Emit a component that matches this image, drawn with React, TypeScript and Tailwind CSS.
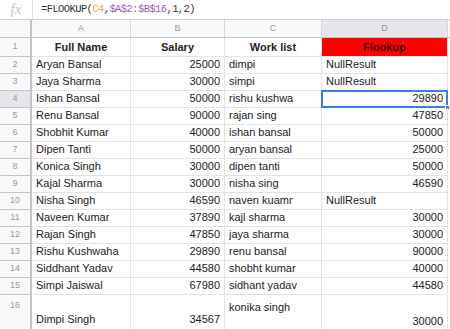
const rows: [string, string, string, string][] = [
  ["Aryan Bansal", "25000", "dimpi", "NullResult"],
  ["Jaya Sharma", "30000", "simpi", "NullResult"],
  ["Ishan Bansal", "50000", "rishu kushwa", "29890"],
  ["Renu Bansal", "90000", "rajan sing", "47850"],
  ["Shobhit Kumar", "40000", "ishan bansal", "50000"],
  ["Dipen Tanti", "50000", "aryan bansal", "25000"],
  ["Konica Singh", "30000", "dipen tanti", "50000"],
  ["Kajal Sharma", "30000", "nisha sing", "46590"],
  ["Nisha Singh", "46590", "naven kuamr", "NullResult"],
  ["Naveen Kumar", "37890", "kajl sharma", "30000"],
  ["Rajan Singh", "47850", "jaya sharma", "30000"],
  ["Rishu Kushwaha", "29890", "renu bansal", "90000"],
  ["Siddhant Yadav", "44580", "shobht kumar", "40000"],
  ["Simpi Jaiswal", "67980", "sidhant yadav", "44580"],
];

const isNum = (s: string) => /^\d+$/.test(s);

function Cell({ value, w, selected }: { value: string; w: string; selected?: boolean }) {
  return (
    <div
      className={`${w} relative h-full flex items-end px-[4px] pb-[1px] border-r border-b border-[#e2e3e3] ${
        isNum(value) ? "justify-end" : "justify-start"
      }`}
    >
      <span className="truncate">{value}</span>
      {selected && (
        <>
          <div className="absolute inset-[-1px] border-2 border-[#3b7de0]" />
          <div className="absolute right-[-3px] bottom-[-3px] w-[5px] h-[5px] bg-[#3b7de0] border border-white" />
        </>
      )}
    </div>
  );
}

export default function App() {
  return (
    <div
      className="w-[450px] h-[329px] overflow-hidden bg-white text-[11px] text-[#222]"
      style={{ fontFamily: '"Liberation Sans", Arial, sans-serif' }}
    >
      {/* formula bar */}
      <div className="flex h-[20px] border-b border-[#d0d0d0]">
        <div className="w-[33px] flex items-center justify-center border-r border-[#e0e0e0]">
          <span className="italic text-[15px] leading-none text-[#c4c4c4]" style={{ fontFamily: '"Liberation Serif", serif' }}>
            fx
          </span>
        </div>
        <div
          className="flex items-center pl-[8px] text-[10.5px] tracking-[-0.6px] text-[#333]"
          style={{ fontFamily: '"Liberation Mono", monospace' }}
        >
          <span>=FLOOKUP(</span>
          <span className="text-[#f0a24a]">C4</span>
          <span>,</span>
          <span className="text-[#9a5cb4]">$A$2:$B$16</span>
          <span>,1,2)</span>
        </div>
      </div>

      {/* column headers */}
      <div className="flex h-[18px] bg-[#f8f9fa] text-[9px] text-[#999] border-b border-[#c4c4c4]">
        <div className="w-[32px] border-r-[2px] border-[#c4c4c4]" />
        <div className="w-[99px] flex items-center justify-center border-r border-[#d8d8d8]">A</div>
        <div className="w-[94px] flex items-center justify-center border-r border-[#d8d8d8]">B</div>
        <div className="w-[97px] flex items-center justify-center border-r border-[#d8d8d8]">C</div>
        <div className="w-[126px] flex items-center justify-center border-r border-[#d8d8d8] bg-[#e4e6e9]">D</div>
      </div>

      {/* row 1 */}
      <div className="flex h-[19px] font-bold text-[11px]">
        <div className="w-[32px] flex items-center justify-center bg-[#f8f9fa] text-[9px] font-normal text-[#999] border-r-[2px] border-b border-[#c4c4c4]">
          1
        </div>
        <div className="w-[99px] flex items-center justify-center border-r border-b border-[#e2e3e3]">Full Name</div>
        <div className="w-[94px] flex items-center justify-center border-r border-b border-[#e2e3e3]">Salary</div>
        <div className="w-[97px] flex items-center justify-center border-r border-b border-[#e2e3e3]">Work list</div>
        <div className="w-[126px] flex items-center justify-center bg-[#ff0000] text-[#3a0000] border-r border-b border-[#e2e3e3]">
          Flookup
        </div>
      </div>

      {rows.map((r, i) => {
        const n = i + 2;
        return (
          <div key={n} className="flex h-[17px]">
            <div
              className={`w-[32px] flex items-center justify-center text-[9px] text-[#999] border-r-[2px] border-b border-[#c4c4c4] ${
                n === 4 ? "bg-[#e4e6e9]" : "bg-[#f8f9fa]"
              }`}
            >
              {n}
            </div>
            <Cell value={r[0]} w="w-[99px]" />
            <Cell value={r[1]} w="w-[94px]" />
            <Cell value={r[2]} w="w-[97px]" />
            <Cell value={r[3]} w="w-[126px]" selected={n === 4} />
          </div>
        );
      })}

      {/* row 16 */}
      <div className="flex h-[36px]">
        <div className="w-[32px] flex justify-center pt-[4px] text-[9px] text-[#999] bg-[#f8f9fa] border-r-[2px] border-b border-[#c4c4c4]">
          16
        </div>
        <div className="w-[99px] flex items-end px-[4px] pb-[3px] border-r border-b border-[#e2e3e3]">Dimpi Singh</div>
        <div className="w-[94px] flex items-end justify-end px-[4px] pb-[3px] border-r border-b border-[#e2e3e3]">34567</div>
        <div className="w-[97px] flex items-start px-[4px] leading-[13px] pt-[6px] border-r border-b border-[#e2e3e3]">konika singh</div>
        <div className="w-[126px] flex items-end justify-end px-[4px] pb-[1px] border-r border-b border-[#e2e3e3]">30000</div>
      </div>
    </div>
  );
}
